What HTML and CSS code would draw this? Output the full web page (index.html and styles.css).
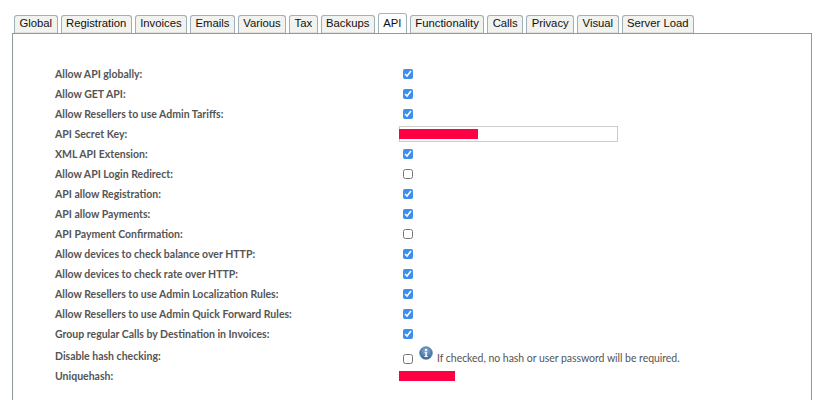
FILE: index.html
```html
<!DOCTYPE html>
<html lang="en">
<head>
    <meta charset="UTF-8">
    <title>Settings | API</title>
    <link rel="stylesheet" href="styles.css">
</head>
<body>
    <ul class="tabs">
        <li>Global</li>
        <li>Registration</li>
        <li>Invoices</li>
        <li>Emails</li>
        <li>Various</li>
        <li>Tax</li>
        <li>Backups</li>
        <li class="active">API</li>
        <li>Functionality</li>
        <li>Calls</li>
        <li>Privacy</li>
        <li>Visual</li>
        <li>Server Load</li>
    </ul>
    <div class="panel">
        <div class="row"><label>Allow API globally:</label><input type="checkbox" checked></div>
        <div class="row"><label>Allow GET API:</label><input type="checkbox" checked></div>
        <div class="row"><label>Allow Resellers to use Admin Tariffs:</label><input type="checkbox" checked></div>
        <div class="row">
            <label>API Secret Key:</label>
            <div class="key-field"><span class="redacted key-mask"></span></div>
        </div>
        <div class="row"><label>XML API Extension:</label><input type="checkbox" checked></div>
        <div class="row"><label>Allow API Login Redirect:</label><input type="checkbox"></div>
        <div class="row"><label>API allow Registration:</label><input type="checkbox" checked></div>
        <div class="row"><label>API allow Payments:</label><input type="checkbox" checked></div>
        <div class="row"><label>API Payment Confirmation:</label><input type="checkbox"></div>
        <div class="row"><label>Allow devices to check balance over HTTP:</label><input type="checkbox" checked></div>
        <div class="row"><label>Allow devices to check rate over HTTP:</label><input type="checkbox" checked></div>
        <div class="row"><label>Allow Resellers to use Admin Localization Rules:</label><input type="checkbox" checked></div>
        <div class="row"><label>Allow Resellers to use Admin Quick Forward Rules:</label><input type="checkbox" checked></div>
        <div class="row"><label>Group regular Calls by Destination in Invoices:</label><input type="checkbox" checked></div>
        <div class="row row-hash">
            <label>Disable hash checking:</label>
            <input type="checkbox">
            <svg class="info-icon" width="14" height="14" viewBox="0 0 15 15">
                <defs>
                    <radialGradient id="infoFill" cx="50%" cy="35%" r="65%">
                        <stop offset="0" stop-color="#8fb4d8"/>
                        <stop offset="1" stop-color="#2f6197"/>
                    </radialGradient>
                </defs>
                <circle cx="7.5" cy="7.5" r="6.8" fill="url(#infoFill)" stroke="#5f7f9f" stroke-width="0.8"/>
                <circle cx="7.5" cy="4.2" r="1.2" fill="#fff"/>
                <path d="M6 6.3h2.4v4.4h1v1H5.8v-1h1v-3.4H6z" fill="#fff"/>
            </svg>
            <span class="hint">If checked, no hash or user password will be required.</span>
        </div>
        <div class="row row-unique">
            <label>Uniquehash:</label>
            <span class="redacted hash-mask"></span>
        </div>
    </div>
</body>
</html>
```

FILE: styles.css
```css
body {
    margin: 0;
    padding: 15px 12px 0;
    background-color: #fff;
    font-family: Lato, Tahoma, sans-serif;
    overflow: hidden;
}

.tabs {
    list-style: none;
    display: flex;
    gap: 3px;
    height: 18px;
    margin: 0;
    padding: 0 0 0 2px;
}

.tabs li {
    height: 17px;
    padding: 0 4.45px;
    background-color: #f2f2ee;
    border: 1px solid #9fb0b8;
    border-bottom: none;
    border-radius: 3px 3px 0 0;
    box-shadow: inset 0 -1px 0 #e2e2dc;
    font-family: "Liberation Sans", Arial, sans-serif;
    font-size: 11.3px;
    line-height: 15px;
    color: #111;
}

.tabs li.active {
    height: 19px;
    margin-top: -2px;
    line-height: 18px;
    background-color: #fff;
    border-top: 1px solid #f0a830;
    box-shadow: none;
}

.panel {
    box-sizing: border-box;
    width: 800px;
    height: 367px;
    padding-top: 30px;
    border: 1px solid #8f9a9a;
    border-bottom: none;
}

.row {
    display: flex;
    align-items: center;
    height: 20px;
    padding-left: 42px;
}

.row label {
    width: 348px;
    font-size: 10.5px;
    font-weight: bold;
    color: #555;
}

.row input {
    width: 10px;
    height: 10px;
    margin: 0;
    accent-color: #3b8df0;
}

.key-field {
    width: 217px;
    height: 14px;
    margin-left: -4px;
    border: 1px solid #ccc;
}

.redacted {
    display: block;
    background-color: #ff0044;
}

.key-mask {
    width: 79px;
    height: 10px;
    margin: 2px 0 0 -1px;
}

.row-hash {
    height: 24px;
}

.row-hash input {
    margin-top: 5px;
}

.info-icon {
    margin: -6px 4px 0 6px;
}

.hint {
    margin-top: 4px;
    font-size: 10.5px;
    letter-spacing: -0.04px;
    color: #555;
}

.row-unique {
    height: 16px;
}

.hash-mask {
    width: 56px;
    height: 10px;
    margin-left: -4px;
}
```
